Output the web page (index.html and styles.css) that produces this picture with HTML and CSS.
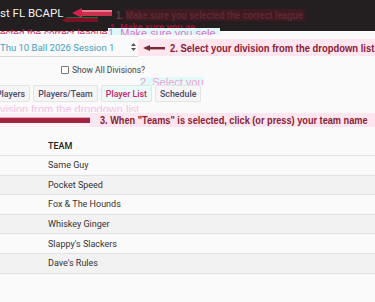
FILE: index.html
```html
<!DOCTYPE html>
<html lang="en">
<head>
    <meta charset="UTF-8">
    <meta name="viewport" content="width=device-width, initial-scale=1.0">
    <title>West FL BCAPL</title>
    <link rel="stylesheet" href="styles.css">
</head>
<body>
    <div class="page">
        <header class="topbar">
            <span class="brand">st FL BCAPL</span>
            <svg class="arrow-one" width="40" height="10" viewBox="0 0 40 10">
                <rect x="8" y="2" width="32" height="6" fill="#c8324f"/>
                <rect x="8" y="2" width="32" height="2" fill="#e87a92"/>
                <polygon points="0,5 10,0 10,10" fill="#d8204a"/>
            </svg>
            <span class="note note-dark"><span class="num">1.</span> <span class="hl">Make sure you selected the correct league</span></span>
            <span class="ghost ghost-red-head">1. Make sure you ae</span>
            <svg class="ghost-arrow" width="36" height="6" viewBox="0 0 36 6">
                <rect x="4" y="1" width="32" height="4" fill="#7c1024"/>
                <rect x="4" y="0" width="32" height="1" fill="#1f6b3a"/>
                <polygon points="0,3 6,0 6,6" fill="#8a1028"/>
            </svg>
        </header>

        <div class="ghost-strip">
            <span class="ghost ghost-red">ected the correct league</span>
            <span class="ghost ghost-cyan">1. Make sure you sele</span>
        </div>

        <div class="division-row">
            <div class="select-box">
                <span class="select-text">Thu 10 Ball 2026 Session 1</span>
                <svg class="chevron" width="5" height="8" viewBox="0 0 5 8">
                    <polygon points="2.5,0 5,3 0,3" fill="#555"/>
                    <polygon points="2.5,8 5,5 0,5" fill="#555"/>
                </svg>
            </div>
            <div class="callout">
                <svg class="arrow-two" width="22" height="6" viewBox="0 0 22 6">
                    <rect x="5" y="2" width="17" height="2.4" fill="#7a2a35"/>
                    <polygon points="0,3 7,0 7,6" fill="#7a2a35"/>
                </svg>
                <span class="note">2. Select your division from the dropdown list</span>
            </div>
        </div>

        <label class="show-all">
            <span class="checkbox"></span>
            Show All Divisions?
        </label>

        <div class="tabs-area">
            <span class="ghost ghost-pink-top">2. Select you</span>
            <div class="tabs">
                <button class="tab">Players</button>
                <button class="tab">Players/Team</button>
                <button class="tab tab-pink">Player List</button>
                <button class="tab">Schedule</button>
            </div>
            <span class="ghost ghost-pink-low">vision from the dropdown list</span>
        </div>

        <div class="callout callout-three">
            <span class="bar"></span>
            <span class="note">3. When "Teams" is selected, click (or press) your team name</span>
        </div>

        <table class="teams">
            <thead>
                <tr><th>TEAM</th></tr>
            </thead>
            <tbody>
                <tr><td>Same Guy</td></tr>
                <tr class="odd"><td>Pocket Speed</td></tr>
                <tr><td>Fox &amp; The Hounds</td></tr>
                <tr class="odd"><td>Whiskey Ginger</td></tr>
                <tr><td>Slappy's Slackers</td></tr>
                <tr class="odd"><td>Dave's Rules</td></tr>
            </tbody>
        </table>
    </div>
</body>
</html>
```

FILE: styles.css
```css
body {
    margin: 0;
    padding: 0;
    background-color: #fafafa;
    font-family: 'Roboto', sans-serif;
    overflow: hidden;
}

.page {
    position: relative;
    width: 375px;
    height: 302px;
    overflow: hidden;
}

.topbar {
    position: relative;
    height: 31px;
    background-color: #231f20;
    display: flex;
    align-items: flex-start;
}

.brand {
    color: #f2f2f2;
    font-size: 11.5px;
    line-height: 12px;
    margin-top: 7px;
    white-space: nowrap;
    flex-shrink: 0;
}

.arrow-one {
    flex-shrink: 0;
    margin: 8px 0 0 8px;
}

.note {
    flex-shrink: 0;
    display: inline-block;
    font-family: 'Liberation Sans', sans-serif;
    font-weight: bold;
    font-size: 11.5px;
    color: #8a2032;
    white-space: nowrap;
    transform: scaleX(0.82);
    transform-origin: left center;
}

.note-dark {
    color: #5e2a33;
    font-size: 11px;
    margin: 9px 0 0 4px;
    line-height: 13px;
    transform: scaleX(0.8);
}

.note-dark .num {
    color: #6a3a40;
}

.note-dark .hl {
    background-color: #3f1a22;
    padding-right: 2px;
}

.ghost {
    position: absolute;
    white-space: nowrap;
    font-family: 'Liberation Sans', sans-serif;
    font-size: 11px;
    line-height: 11px;
}

.ghost-red-head {
    left: 110px;
    top: 23px;
    color: #a8123a;
    font-weight: bold;
    font-size: 9px;
    line-height: 9px;
    height: 6px;
    overflow: hidden;
}

.ghost-arrow {
    position: absolute;
    left: 62px;
    top: 17px;
}

.ghost-strip {
    position: relative;
    height: 6px;
}

.ghost-red {
    left: 0;
    top: -3px;
    height: 6px;
    overflow: hidden;
    font-size: 10px;
    color: #d8305a;
}

.ghost-cyan {
    left: 108px;
    top: -3px;
    height: 7px;
    overflow: hidden;
    color: #e070d0;
    background-color: #dcfbf7;
    padding-right: 4px;
}

.division-row {
    display: flex;
    align-items: center;
    height: 19px;
    margin-top: 1px;
}

.select-box {
    flex-shrink: 0;
    width: 138px;
    height: 18px;
    display: flex;
    align-items: center;
    justify-content: space-between;
    border-bottom: 1px solid #d6d6d6;
}

.select-text {
    font-size: 9.5px;
    color: #3f9fc4;
    white-space: nowrap;
}

.chevron {
    margin-right: 2px;
}

.callout {
    display: flex;
    align-items: center;
    background-color: #fde6f0;
    flex: 1;
    height: 17px;
    overflow: hidden;
}

.arrow-two {
    flex-shrink: 0;
    margin: 0 5px 0 5px;
}

.show-all {
    display: flex;
    align-items: center;
    gap: 3px;
    margin: 8px 0 0 61px;
    font-size: 8.5px;
    color: #444;
}

.checkbox {
    width: 6px;
    height: 6px;
    border: 1px solid #777;
    border-radius: 1px;
    background: #fff;
}

.tabs-area {
    position: relative;
    height: 28px;
    padding-top: 10px;
}

.ghost-pink-top {
    left: 140px;
    top: 2px;
    height: 8px;
    overflow: hidden;
    color: #f0a0d8;
    background-color: #e2fbf8;
}

.ghost-pink-low {
    left: 0;
    top: 29px;
    height: 8px;
    overflow: hidden;
    color: #f6c0e6;
}

.tabs {
    position: relative;
    display: flex;
    gap: 3px;
    margin-left: -9px;
}

.tab {
    font-family: 'Roboto', sans-serif;
    font-size: 8.8px;
    font-weight: 500;
    color: #4c4a68;
    background-color: #f6f6f6;
    border: 1px solid #e4e4e4;
    border-radius: 2px;
    height: 17px;
    padding: 0 4px;
}

.tab-pink {
    color: #d0206a;
    background-color: #eafcf8;
}

.callout-three {
    height: 14px;
    background: linear-gradient(to right, #fff0f6 90px, #fde6f0 90px);
}

.bar {
    flex-shrink: 0;
    width: 90px;
    height: 5px;
    background-color: #a3243e;
    border-top: 1px solid #f2a0c0;
    margin-right: 10px;
}

.callout-three .note {
    font-size: 11.2px;
}

.teams {
    width: 100%;
    border-collapse: collapse;
    margin-top: 10px;
    font-size: 9px;
    color: #333;
}

.teams th {
    text-align: left;
    font-weight: 500;
    height: 18px;
    padding: 0 0 0 48px;
    color: #222;
}

.teams td {
    height: 18.6px;
    padding: 0 0 0 48px;
    border-top: 1px solid #e2e2e2;
    border-bottom: 1px solid #e2e2e2;
    background-color: #fafafa;
}

.teams tr.odd td {
    background-color: #f2f2f2;
}
```
